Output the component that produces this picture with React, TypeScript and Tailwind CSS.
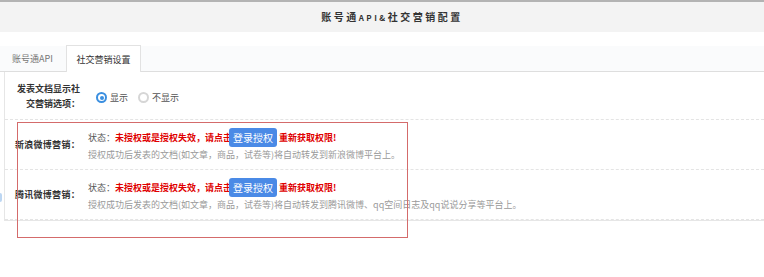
import React from "react";

const Radio = ({ checked, label }: { checked?: boolean; label: string }) => (
  <label className="inline-flex items-center gap-[3px] mr-[10px]">
    {checked ? (
      <span className="w-[11px] h-[11px] rounded-full bg-[#3b8fe0] flex items-center justify-center">
        <span className="w-[7px] h-[7px] rounded-full bg-white flex items-center justify-center">
          <span className="w-[4px] h-[4px] rounded-full bg-[#3b8fe0]"></span>
        </span>
      </span>
    ) : (
      <span className="w-[11px] h-[11px] rounded-full border-2 border-[#d6d6d6] bg-white"></span>
    )}
    <span className="text-[#555]">{label}</span>
  </label>
);

const AuthRow = ({ label, desc }: { label: string; desc: string }) => (
  <div className="h-[50px] flex items-center border-b border-dashed border-[#e4e4e4]">
    <div className="w-[75px] text-right font-bold text-[#333] tracking-[0.3px]">{label}</div>
    <div className="pl-[8px] flex flex-col">
      <div className="flex items-center h-[19px] whitespace-nowrap">
        <span className="text-[#555]">状态：</span>
        <span className="text-[#e00000] font-bold">未授权或是授权失效，请点击</span>
        <button className="h-[19px] w-[48px] ml-[-3px] mr-[2px] rounded-[3px] bg-[#4a8ae6] text-white text-[10px] leading-none">
          登录授权
        </button>
        <span className="text-[#e00000] font-bold">重新获取权限!</span>
      </div>
      <div className="text-[#9a9a9a] leading-[13px] mt-[1px] whitespace-nowrap">{desc}</div>
    </div>
  </div>
);

export default function App() {
  return (
    <div className="relative w-[764px] h-[277px] bg-white overflow-hidden text-[9px] leading-[15px] font-['Noto_Sans_CJK_SC','Noto_Sans',sans-serif]">
      <div className="h-[32px] border-t-2 border-[#b3b3b3] bg-[#f3f3f3] flex items-center justify-center">
        <span className="font-bold text-[#333] text-[10px] tracking-[2.5px] ml-[20px]">
          账号通<span className="text-[8px]">API&amp;</span>社交营销配置
        </span>
      </div>

      <div className="mt-[14px] h-[26px] bg-[#fafbfc] border-b border-[#dedede] flex items-end pl-[12px]">
        <div className="h-full w-[54px] flex items-center text-[#777]">账号通API</div>
        <div className="h-[27px] -mb-px w-[75px] bg-white border border-b-0 border-[#e2e2e2] flex items-center justify-center text-[#333]">
          社交营销设置
        </div>
      </div>

      <div className="ml-[4px] border-l border-b border-[#e6e6e6]">
        <div className="h-[48px] flex items-center border-b border-dashed border-[#e4e4e4]">
          <div className="w-[75px] text-right font-bold text-[#333]">
            发表文档显示社
            <br />
            交营销选项：
          </div>
          <div className="pl-[16px] flex items-center pt-[4px]">
            <Radio checked label="显示" />
            <Radio label="不显示" />
          </div>
        </div>
        <AuthRow
          label="新浪微博营销："
          desc="授权成功后发表的文档(如文章，商品，试卷等)将自动转发到新浪微博平台上。"
        />
        <AuthRow
          label="腾讯微博营销："
          desc="授权成功后发表的文档(如文章，商品，试卷等)将自动转发到腾讯微博、qq空间日志及qq说说分享等平台上。"
        />
      </div>

      <div className="absolute left-0 top-[193px] w-[2px] h-[9px] bg-[#bcd6f2] rounded-r-[2px]"></div>
      <div className="absolute left-[17px] top-[122px] w-[391px] h-[116px] border border-[#d46b6b]"></div>
    </div>
  );
}
